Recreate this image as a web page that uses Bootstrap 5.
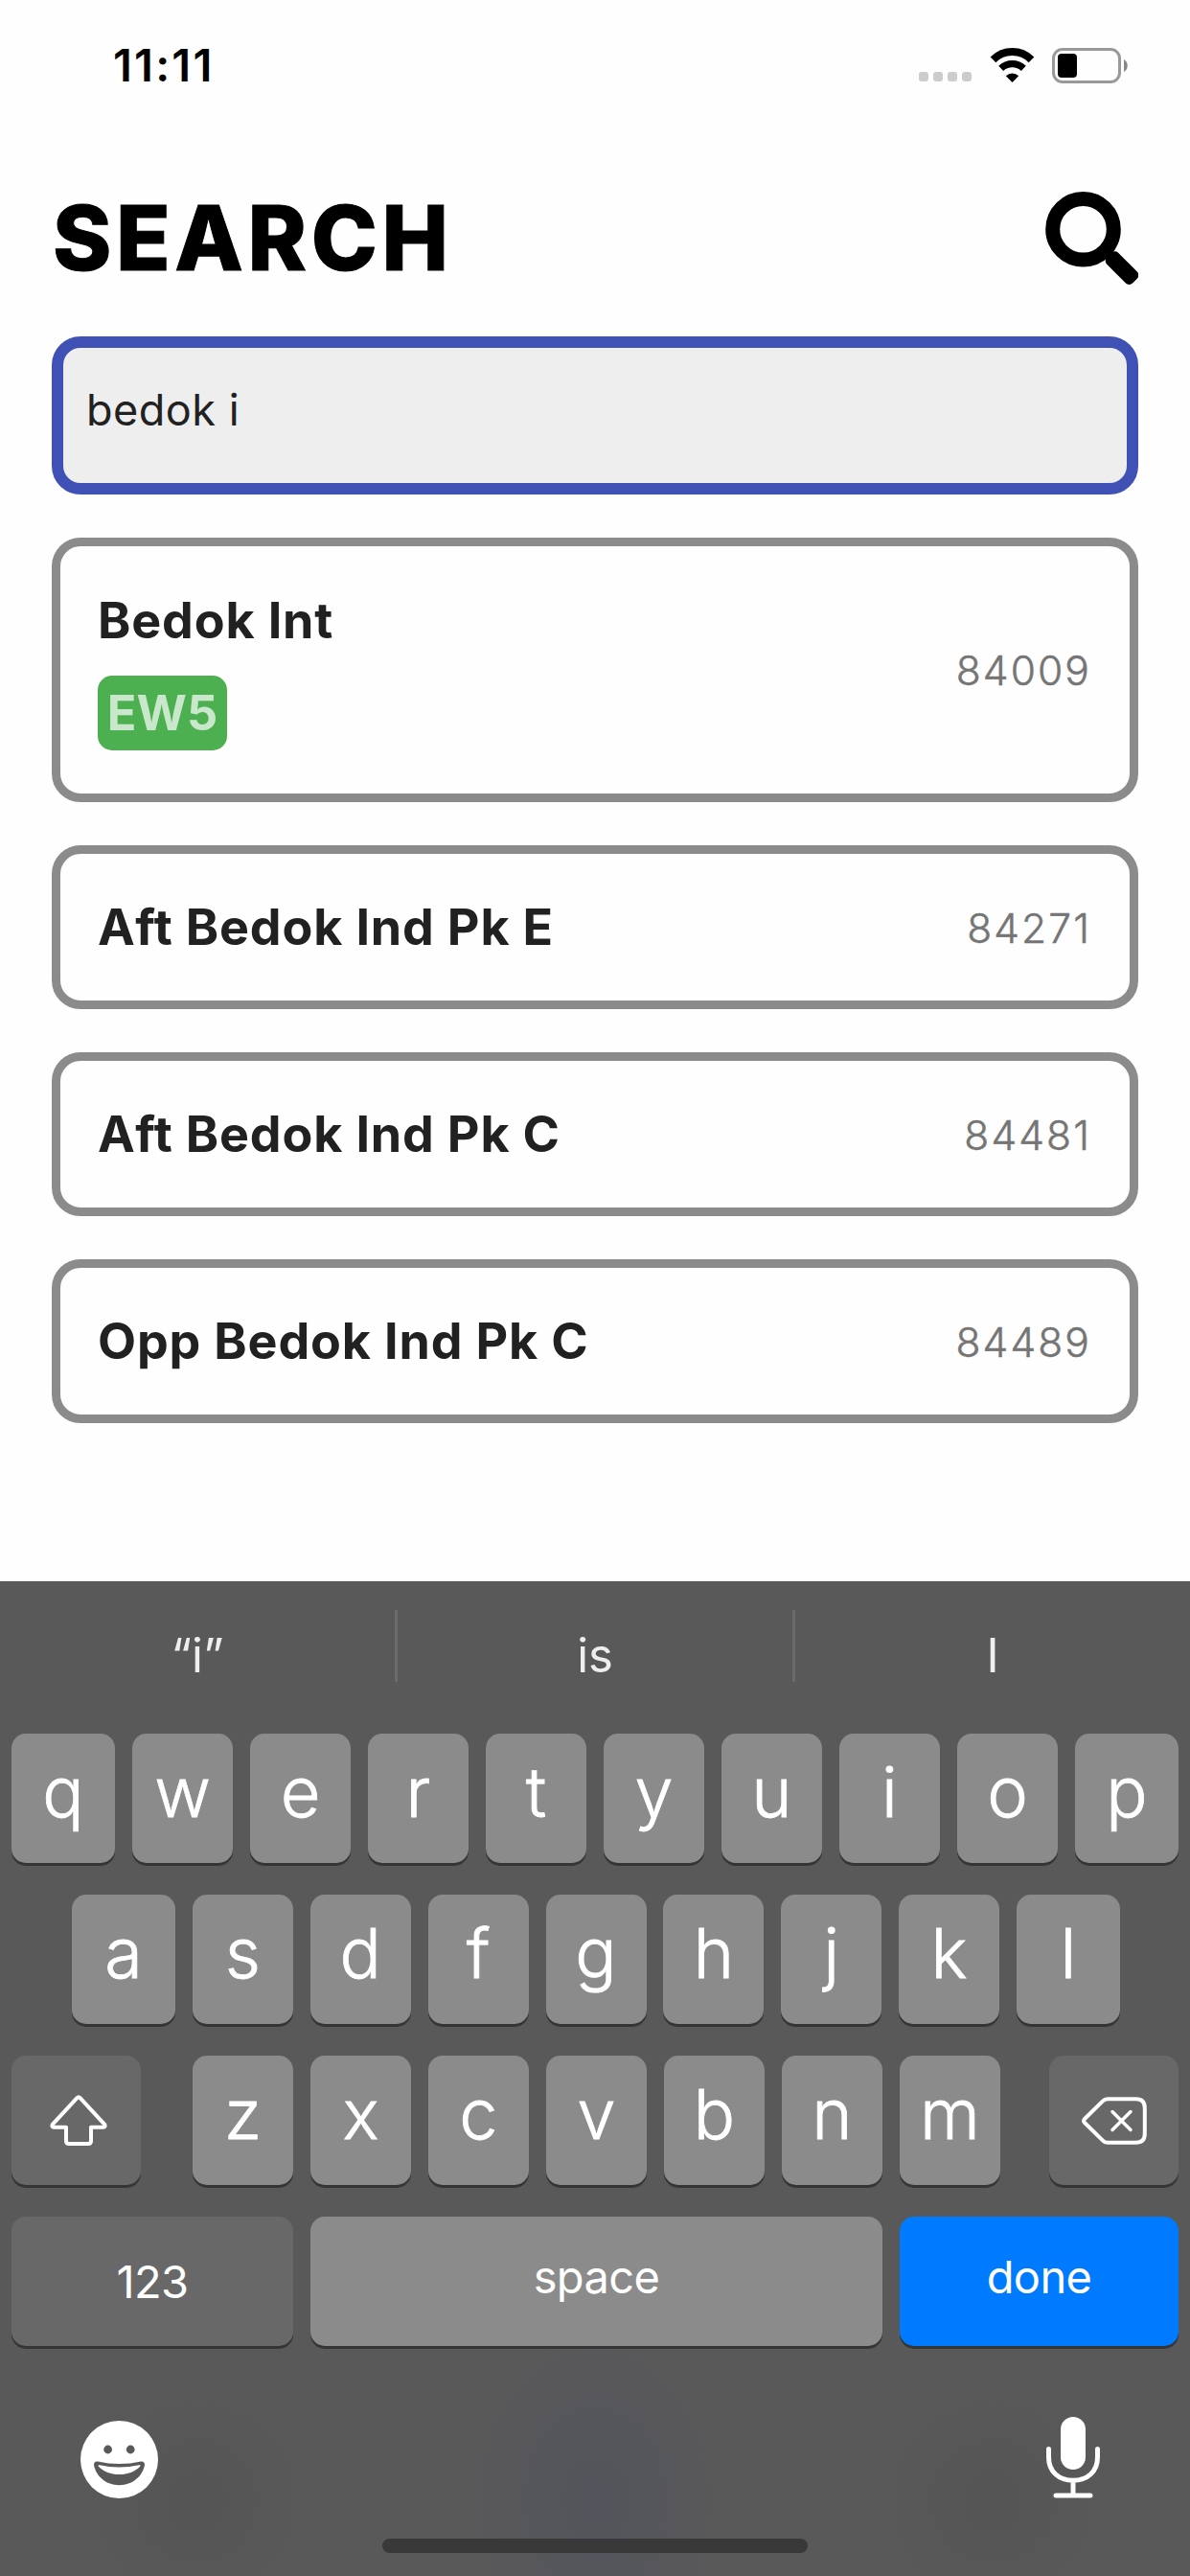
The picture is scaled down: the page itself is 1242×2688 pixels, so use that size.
<!DOCTYPE html>
<html lang="en">
<head>
<meta charset="utf-8">
<meta name="viewport" content="width=device-width, initial-scale=1">
<title>Search</title>
<link href="https://cdn.jsdelivr.net/npm/bootstrap@5.3.0/dist/css/bootstrap.min.css" rel="stylesheet">
<style>
  body { width: 1242px; height: 2688px; overflow: hidden; background: #fefefe; font-family: Inter, "Liberation Sans", sans-serif; color: #212121; }
  svg { display: block; flex: none; }
  .status-bar { height: 136px; padding: 0 64px 0 118px; color: #000; }
  .clock { font-size: 47px; font-weight: 600; line-height: 136px; letter-spacing: 2.2px; }
  .signal { gap: 5px; padding-top: 24px; margin-right: 19px; }
  .signal i { width: 10px; height: 10px; border-radius: 3px; background: #ccc; }
  .page-head { height: 215px; padding: 0 54px 0 55px; color: #000; }
  .page-title { font-size: 93px; font-weight: 800; line-height: 112px; margin: 56px 0 0; letter-spacing: 4.6px; -webkit-text-stroke: 1px #000; }
  .search-field { height: 165px; margin: 0 54px; padding: 0 24px; width: auto; border: 12px solid #3f51b5; border-radius: 30px; background: #eee; color: #212121; font-size: 45px; line-height: 129px; letter-spacing: .5px; }
  .stops { margin: 45px 54px 0; gap: 45px; }
  .stop { min-height: 171px; border: 9px solid #8b8b8b; border-radius: 30px; padding: 0 40px 0 39px; background: #fefefe; }
  .stop-tall { min-height: 276px; }
  .stop-name { font-size: 52px; font-weight: 700; line-height: 66px; margin: 0; letter-spacing: .85px; }
  .station { margin: 24px 0 1px; width: 135px; height: 78px; border-radius: 15px; background: #4caf50; color: rgba(255,255,255,.7); font-size: 50.5px; font-weight: 700; line-height: 77px; text-align: center; padding: 0; }
  .stop-code { font-size: 42.5px; font-weight: 300; -webkit-text-stroke: .5px #757575; color: #757575; letter-spacing: 2.1px; line-height: 50px; padding-top: 2px; }
  .keyboard { height: 1038px; color: #fff;
    background: radial-gradient(ellipse 150px 200px at 621px 960px, rgba(80,82,94,.6), rgba(80,82,94,0)), radial-gradient(circle 130px at 205px 960px, rgba(82,82,82,.6), rgba(82,82,82,0)), radial-gradient(circle 130px at 1035px 960px, rgba(82,82,82,.6), rgba(82,82,82,0)), #595959; }
  .suggestions { height: 159px; font-size: 49px; line-height: 155px; color: #eee; }
  .suggestions .word { flex: 1; text-align: center; }
  .suggestions .rule { width: 3px; height: 75px; margin-top: 30px; background: #6b6b6b; }
  .key-rows { padding: 0 12px; gap: 33px; }
  .key-row { gap: 18px; }
  .home-row { margin: 0 61px 0 63px; gap: 0; }
  .bottom-letters { margin-left: 3px; }
  .key { display: flex; justify-content: center; width: 105px; height: 135px; padding: 0; border: 0; border-radius: 15px; background: #8b8b8b; color: #fff; box-shadow: 0 3px 0 #353535; font-size: 72px; font-weight: 300; -webkit-text-stroke: .8px #fff; line-height: 122px; }
  .key-edge { width: 108px; }
  .key-fn { width: 135px; background: #686868; align-items: center; }
  .key-text { font-size: 47px; font-weight: 400; -webkit-text-stroke: 0; line-height: 126px; letter-spacing: -.6px; }
  .dock { padding: 0 93px 0 84px; height: 201px; }
  .home-bar { width: 444px; height: 15px; border-radius: 8px; background: #393939; }
</style>
</head>
<body class="d-flex flex-column">
  <header class="status-bar d-flex justify-content-between">
    <div class="clock">11:11</div>
    <div class="d-flex align-items-center">
      <div class="signal d-flex"><i></i><i></i><i></i><i></i></div>
      <svg width="47" height="36" viewBox="0 0 47 36" style="margin-right:18px">
        <path d="M3.500 12.300a28.300 28.300 0 0 1 40 0" fill="none" stroke="#000" stroke-width="8"/>
        <path d="M11.700 21.300a17 17 0 0 1 23.600 0" fill="none" stroke="#000" stroke-width="7.200"/>
        <path d="M23.500 36l-6.700-6.800a9.800 9.800 0 0 1 13.400 0z"/>
      </svg>
      <svg width="80" height="37" viewBox="0 0 80 37">
        <rect x="1.500" y="1.500" width="69" height="34" rx="9.500" fill="none" stroke="#999" stroke-width="3"/>
        <rect x="6" y="6" width="20" height="25" rx="4"/>
        <path d="M75 12v13c5-2.500 5-10.500 0-13z" fill="#888"/>
      </svg>
    </div>
  </header>

  <div class="page-head d-flex justify-content-between">
    <h1 class="page-title">SEARCH</h1>
    <svg width="97" height="98" viewBox="0 0 97 98" style="margin-top:64px">
      <circle cx="39.500" cy="39.300" r="31.800" fill="none" stroke="#000" stroke-width="15"/>
      <rect x="61" y="71.200" width="38" height="16.800" rx="5" transform="rotate(45 80 79.600)"/>
    </svg>
  </div>

  <div class="search-field form-control flex-shrink-0">bedok i</div>

  <main class="stops d-flex flex-column flex-grow-1">
    <div class="stop stop-tall d-flex align-items-center justify-content-between">
      <div>
        <h2 class="stop-name">Bedok Int</h2>
        <div class="station">EW5</div>
      </div>
      <span class="stop-code">84009</span>
    </div>
    <div class="stop d-flex align-items-center justify-content-between">
      <h2 class="stop-name">Aft Bedok Ind Pk E</h2>
      <span class="stop-code">84271</span>
    </div>
    <div class="stop d-flex align-items-center justify-content-between">
      <h2 class="stop-name">Aft Bedok Ind Pk C</h2>
      <span class="stop-code">84481</span>
    </div>
    <div class="stop d-flex align-items-center justify-content-between">
      <h2 class="stop-name">Opp Bedok Ind Pk C</h2>
      <span class="stop-code">84489</span>
    </div>
  </main>

  <section class="keyboard flex-shrink-0 d-flex flex-column">
    <div class="suggestions d-flex">
      <span class="word">“i”</span><span class="rule"></span><span class="word">is</span><span class="rule"></span><span class="word">I</span>
    </div>
    <div class="key-rows d-flex flex-column">
      <div class="key-row d-flex justify-content-between">
        <button class="key key-edge">q</button><button class="key">w</button><button class="key">e</button><button class="key">r</button><button class="key">t</button><button class="key">y</button><button class="key">u</button><button class="key">i</button><button class="key">o</button><button class="key key-edge">p</button>
      </div>
      <div class="home-row d-flex justify-content-between">
        <button class="key key-edge">a</button><button class="key">s</button><button class="key">d</button><button class="key">f</button><button class="key">g</button><button class="key">h</button><button class="key">j</button><button class="key">k</button><button class="key key-edge">l</button>
      </div>
      <div class="d-flex justify-content-between">
        <button class="key key-fn" aria-label="shift">
          <svg width="60" height="54" viewBox="0 0 60 54" class="ms-1" fill="none" stroke="#fff" stroke-width="4" stroke-linejoin="round">
            <path d="M28.400 3.200L3.200 30.400c-1.500 1.800-.8 3.400 1.200 3.400H17V48q0 3 3 3h20q3 0 3-3V33.800h12.600c2 0 2.700-1.600 1.200-3.400L31.600 3.200q-1.600-1.600-3.200 0z"/>
          </svg>
        </button>
        <div class="key-row bottom-letters d-flex">
          <button class="key">z</button><button class="key">x</button><button class="key">c</button><button class="key">v</button><button class="key">b</button><button class="key">n</button><button class="key">m</button>
        </div>
        <button class="key key-fn" aria-label="delete">
          <svg width="68" height="50" viewBox="0 0 68 50" fill="none" stroke="#fff" stroke-width="4" stroke-linecap="round" stroke-linejoin="round">
            <path d="M27 2.200h29.500q9.300 0 9.300 9.300v27q0 9.300-9.300 9.300H27q-3 0-5-2.200L3 27q-1.800-2 0-4L22 4.400q2-2.200 5-2.200z"/>
            <path d="M32 15.500L51 34.500M51 15.500L32 34.500" stroke-width="3.500"/>
          </svg>
        </button>
      </div>
      <div class="key-row d-flex">
        <button class="key key-fn key-text" style="width:294px">123</button>
        <button class="key key-text" style="width:597px">space</button>
        <button class="key key-text" style="width:291px;background:#007aff">done</button>
      </div>
    </div>
    <div class="dock d-flex justify-content-between">
      <svg width="81" height="81" viewBox="0 0 81 81" style="margin-top:78px">
        <circle cx="40.500" cy="40.500" r="40.500" fill="#fff"/>
        <circle cx="28.600" cy="30" r="4.400" fill="#595959"/><circle cx="52.200" cy="30" r="4.400" fill="#595959"/>
        <path d="M14 46q0-4 4-3.500 22.500 5 45 0 4-.5 4 3.500C65 58 54 67.200 40.500 67.200S16 58 14 46z" fill="#595959"/>
        <path d="M20 46.200q20.500 4.800 41 0c1.500-.2 2 .5 1 1.500C57 53 49.500 56 40.500 56S24 53 19 47.700c-1-1-.5-1.700 1-1.500z" fill="#fff"/>
      </svg>
      <svg width="58" height="86" viewBox="0 0 58 86" style="margin-top:73px" fill="none" stroke="#fff" stroke-width="5" stroke-linecap="round">
        <rect x="16" y="1" width="26" height="55" rx="13" fill="#fff" stroke="none"/>
        <path d="M3.500 34.500v8.500C3.500 58 14 67.200 29 67.200S54.500 58 54.500 43v-8.500M29 68v15M11 83h36"/>
      </svg>
    </div>
    <div class="home-bar mx-auto"></div>
  </section>
<script src="https://cdn.jsdelivr.net/npm/bootstrap@5.3.0/dist/js/bootstrap.bundle.min.js"></script>
</body>
</html>
